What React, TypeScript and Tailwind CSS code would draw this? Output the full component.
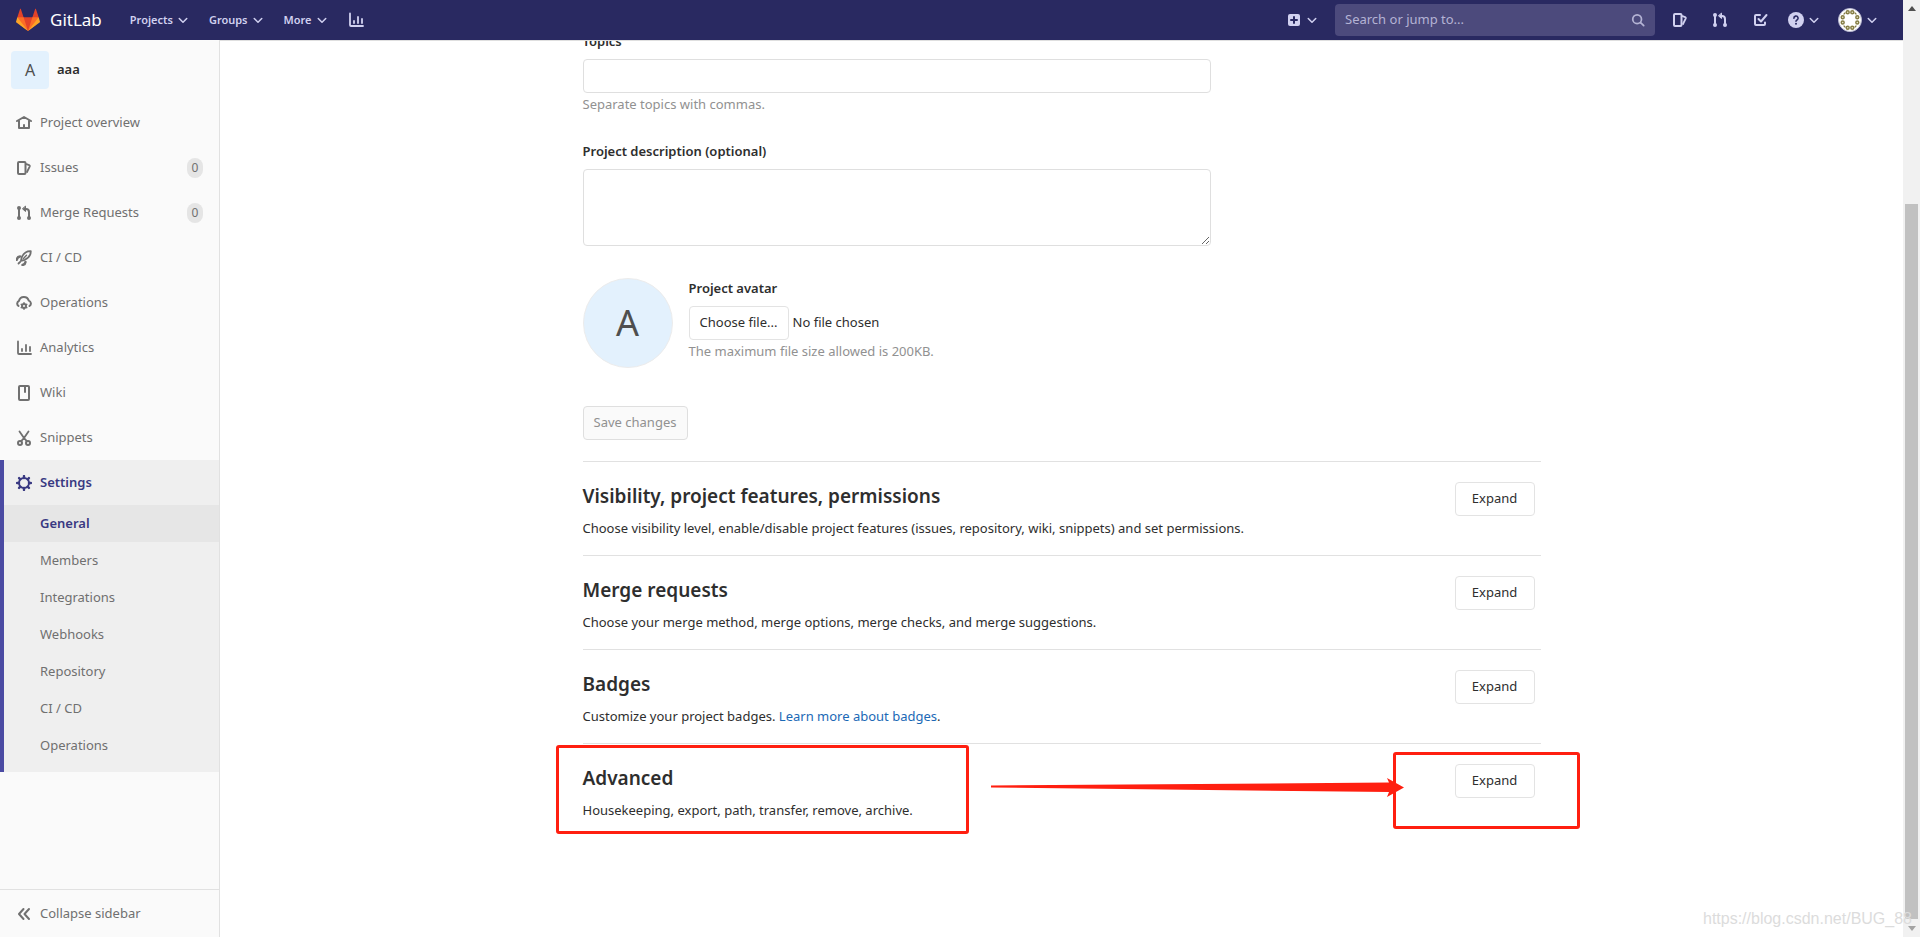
import type { ReactNode } from 'react'
import clsx from 'clsx'

/* ---------- icons (16px grid) ---------- */

type IconProps = { className?: string; children: ReactNode }

function Icon({ className, children }: IconProps) {
  return (
    <svg
      viewBox="0 0 16 16"
      className={clsx('shrink-0', className ?? 'h-4 w-4')}
      fill="none"
      stroke="currentColor"
      strokeWidth="2"
      strokeLinecap="round"
      strokeLinejoin="round"
      aria-hidden="true"
    >
      {children}
    </svg>
  )
}

const Chevron = () => (
  <Icon className="h-3 w-3">
    <path d="M3 6l5 5 5-5" />
  </Icon>
)

const HomeIcon = () => (
  <Icon>
    <path d="M1 6L8 2l7 4M3 6v7h10V6M8 10v3" />
  </Icon>
)

const IssuesIcon = () => (
  <Icon>
    <path d="M3 2h5.500a1 1 0 0 1 1 1v10a1 1 0 0 1-1 1H3a1 1 0 0 1-1-1V3a1 1 0 0 1 1-1z" />
    <path d="M10.500 4.200l2.700.9a1 1 0 0 1 .6 1.200L11 12" strokeWidth="1.800" />
  </Icon>
)

const MergeIcon = () => (
  <Icon>
    <path d="M3 3v10M13 13V7a3 3 0 0 0-3-3H8.500" />
    <circle cx="3" cy="3" r="1" />
    <circle cx="3" cy="13" r="1" />
    <circle cx="13" cy="13" r="1" />
    <path d="M9.500 1.500v5L6.700 4z" fill="currentColor" strokeWidth="1" />
  </Icon>
)

const RocketIcon = () => (
  <Icon>
    <path d="M14.800 1.200c-4-.2-7 1.600-9 6L5 10.800l3.800-1c4.300-2 6-4.600 6-8.600z" strokeWidth="1.800" />
    <path d="M7.500 8.500l3-3.200" strokeWidth="1.400" />
    <path d="M4 6.500C2.300 6.700 1 8 .8 9.800M9.500 12c-.2 1.700-1.200 2.700-3 3" strokeWidth="2.400" />
    <path d="M4.200 11.800l-1.700 1.700" strokeWidth="1.800" />
  </Icon>
)

const CloudGearIcon = () => (
  <Icon>
    <path d="M2.500 11A3 3 0 0 1 3 5.800 5 5 0 0 1 12.700 5.600a3 3 0 0 1 .8 5.400" />
    <circle cx="8" cy="11" r="2" />
    <path d="M8 7.800v1M8 13.200v1M5.200 9.400l.9.5M9.900 12.100l.9.5M5.200 12.600l.9-.5M9.900 9.900l.9-.5" strokeWidth="1.500" />
  </Icon>
)

const ChartIcon = () => (
  <Icon>
    <path d="M2 1.500V13a1 1 0 0 0 1 1h12" strokeWidth="1.800" />
    <path d="M6 9v2M10 5v6M14 7v4" strokeWidth="1.800" />
  </Icon>
)

const BookIcon = () => (
  <Icon>
    <path d="M4 1h8a1 1 0 0 1 1 1v12a1 1 0 0 1-1 1H4a1 1 0 0 1-1-1V2a1 1 0 0 1 1-1z" />
    <path d="M9 2v5" />
  </Icon>
)

const ScissorsIcon = () => (
  <Icon>
    <path d="M3.500 1.500L8 8l2.800 3.200M12.500 1.500L8 8l-2.800 3.200" strokeWidth="1.800" />
    <circle cx="4" cy="13" r="2" />
    <circle cx="12" cy="13" r="2" />
  </Icon>
)

const GearIcon = () => (
  <Icon>
    <circle cx="8" cy="8" r="5" />
    <path
      d="M8 1v2M8 13v2M1 8h2M13 8h2M3.100 3.100l1.200 1.200M11.700 11.700l1.200 1.200M3.100 12.900l1.200-1.200M11.700 4.300l1.200-1.200"
      strokeWidth="2.400"
    />
  </Icon>
)

const CollapseIcon = () => (
  <Icon>
    <path d="M7.500 3L3 8l4.500 5M13 3L8.500 8l4.500 5" />
  </Icon>
)

const PlusIcon = () => (
  <Icon>
    <rect x="2" y="2" width="12" height="12" rx="2" fill="currentColor" strokeWidth="0" />
    <path d="M8 5v6M5 8h6" stroke="#292961" />
  </Icon>
)

const SearchIcon = () => (
  <Icon className="h-3.5 w-3.5">
    <circle cx="7" cy="7" r="5" />
    <path d="M11 11l3.500 3.500" />
  </Icon>
)

const TodoIcon = () => (
  <Icon>
    <path d="M8 3H4a1 1 0 0 0-1 1v8a1 1 0 0 0 1 1h8a1 1 0 0 0 1-1v-1.500" />
    <path d="M6.500 7L9 9.500 14.500 3" />
  </Icon>
)

const HelpIcon = () => (
  <Icon>
    <circle cx="8" cy="8" r="8" fill="currentColor" strokeWidth="0" />
    <path d="M5.900 6.300A2.100 2.100 0 1 1 9 8c-.7.400-1 .8-1 1.300" stroke="#292961" strokeWidth="1.600" />
    <circle cx="8" cy="11.800" r="1" fill="#292961" strokeWidth="0" />
  </Icon>
)

const Logo = () => (
  <svg viewBox="0 0 36 36" className="h-6 w-6" aria-hidden="true">
    <path fill="#e24329" d="M2 14l9.380 9v-9l-4-12.280c-.205-.632-1.176-.632-1.380 0z" />
    <path fill="#e24329" d="M34 14l-9.380 9v-9l4-12.280c.205-.632 1.176-.632 1.380 0z" />
    <path fill="#e24329" d="M18 34.380L3 14h30z" />
    <path fill="#fc6d26" d="M18 34.380L11.380 14H2l4 11z" />
    <path fill="#fc6d26" d="M18 34.380L24.620 14H34l-4 11z" />
    <path fill="#fca326" d="M2 14L.1 20.160c-.18.565 0 1.200.5 1.560l17.420 12.660z" />
    <path fill="#fca326" d="M34 14l1.900 6.160c.18.565 0 1.200-.5 1.560L18 34.380z" />
  </svg>
)

// Eight small rings in facing pairs round a white disc
const RINGS = [
  [9.700, 4.200],
  [14.300, 4.200],
  [19.300, 9.200],
  [19.300, 14.500],
  [14.300, 19.800],
  [9.700, 19.800],
  [4.700, 14.500],
  [4.700, 9.200],
]

const UserAvatar = () => (
  <svg viewBox="0 0 24 24" className="h-6 w-6" aria-hidden="true">
    <circle cx="12" cy="12" r="11.500" fill="#fff" stroke="#b9b9d0" />
    {RINGS.map(([cx, cy]) => (
      <circle key={`${cx}-${cy}`} cx={cx} cy={cy} r="1.500" fill="#e6e3c8" stroke="#857d45" strokeWidth="1.400" />
    ))}
    <path
      d="M6 6l1-1M17 5l1 1M6 18l1 1M17 19l1-1"
      stroke="#857d45"
      strokeWidth="1.200"
      strokeLinecap="round"
    />
  </svg>
)

/* ---------- data ---------- */

const MENUS = ['Projects', 'Groups', 'More']

const NAV = [
  { label: 'Project overview', icon: <HomeIcon /> },
  { label: 'Issues', icon: <IssuesIcon />, count: 0 },
  { label: 'Merge Requests', icon: <MergeIcon />, count: 0 },
  { label: 'CI / CD', icon: <RocketIcon /> },
  { label: 'Operations', icon: <CloudGearIcon /> },
  { label: 'Analytics', icon: <ChartIcon /> },
  { label: 'Wiki', icon: <BookIcon /> },
  { label: 'Snippets', icon: <ScissorsIcon /> },
]

const SETTINGS = ['General', 'Members', 'Integrations', 'Webhooks', 'Repository', 'CI / CD', 'Operations']

/* ---------- page parts ---------- */

function Header() {
  return (
    <header className="flex h-10 shrink-0 items-center bg-[#292961] pl-4 pr-[25px] text-[#d1d1f0]">
      <a href="#" className="flex items-center gap-2.5 text-[17px] text-white">
        <Logo />
        GitLab
      </a>
      <nav className="ml-7 flex items-center gap-5">
        {MENUS.map((menu) => (
          <button key={menu} className="flex items-center gap-1 text-[11px] font-semibold">
            {menu}
            <Chevron />
          </button>
        ))}
        <a href="#" aria-label="Analytics">
          <ChartIcon />
        </a>
      </nav>

      <div className="ml-auto flex items-center">
        <button aria-label="New" className="flex items-center gap-1">
          <PlusIcon />
          <Chevron />
        </button>
        <label className="ml-[17px] flex h-8 w-80 items-center rounded bg-[#4c4a7c] px-2.5">
          <input
            type="text"
            aria-label="Search"
            placeholder="Search or jump to..."
            className="min-w-0 flex-1 bg-transparent text-[13px] outline-none placeholder:text-[#b4b3d4]"
          />
          <span className="text-[#b4b3d4]">
            <SearchIcon />
          </span>
        </label>
        <div className="ml-[17px] flex items-center gap-6">
          <a href="#" aria-label="Issues">
            <IssuesIcon />
          </a>
          <a href="#" aria-label="Merge requests">
            <MergeIcon />
          </a>
          <a href="#" aria-label="To-Do List">
            <TodoIcon />
          </a>
        </div>
        <button aria-label="Help" className="ml-5 flex items-center gap-1">
          <HelpIcon />
          <Chevron />
        </button>
        <button aria-label="Account" className="ml-[18px] flex items-center gap-1">
          <UserAvatar />
          <Chevron />
        </button>
      </div>
    </header>
  )
}

function Sidebar() {
  return (
    <aside className="flex w-[220px] shrink-0 flex-col border-r border-[#e1e1e1] bg-[#fafafa] text-[#707070]">
      <a href="#" className="flex h-[60px] items-center gap-2 px-[11px] font-semibold text-[#2e2e2e]">
        <span className="flex h-[38px] w-[38px] items-center justify-center rounded bg-[#e3f1fd] text-base font-normal text-[#4f4f4f]">
          A
        </span>
        aaa
      </a>

      <ul>
        {NAV.map((item) => (
          <li key={item.label}>
            <a href="#" className="flex h-[45px] items-center gap-2 px-4">
              {item.icon}
              {item.label}
              {item.count !== undefined && (
                <span className="ml-auto flex h-5 w-4 items-center justify-center rounded-full bg-[#e5e5e5] text-xs">
                  {item.count}
                </span>
              )}
            </a>
          </li>
        ))}
        <li className="border-l-4 border-[#4b4ba3] bg-[#efefef] pb-2">
          <a href="#" className="flex h-[45px] items-center gap-2 pl-3 font-semibold text-[#393982]">
            <GearIcon />
            Settings
          </a>
          <ul>
            {SETTINGS.map((label, i) => (
              <li key={label}>
                <a
                  href="#"
                  className={clsx(
                    'flex h-[37px] items-center pl-9',
                    i === 0 && 'bg-[#e6e6e6] font-semibold text-[#393982]'
                  )}
                >
                  {label}
                </a>
              </li>
            ))}
          </ul>
        </li>
      </ul>

      <button className="mt-auto flex h-12 items-center gap-2 border-t border-[#e1e1e1] px-4">
        <CollapseIcon />
        Collapse sidebar
      </button>
    </aside>
  )
}

type SectionProps = { title: string; children: ReactNode; overlay?: ReactNode }

function Section({ title, children, overlay }: SectionProps) {
  return (
    <section className="relative flex h-[94px] items-start justify-between border-t border-[#e1e1e1] pr-1.5 pt-5">
      <div>
        <h4 className="text-[19px] font-semibold leading-7">{title}</h4>
        <p className="mt-2 leading-5">{children}</p>
      </div>
      <button className="h-[34px] w-20 rounded border border-[#e3e3e3] bg-white">Expand</button>
      {overlay}
    </section>
  )
}

// Red marks pointing from the Advanced section to its Expand button
function Marks() {
  return (
    <>
      <div className="absolute -left-[27px] top-px h-[89px] w-[413px] rounded-[3px] border-3 border-[#ff1f10]" />
      <div className="absolute -right-[39px] top-2 h-[77px] w-[187px] rounded-[3px] border-3 border-[#ff1f10]" />
      <svg viewBox="0 0 413 20" className="absolute right-[137px] top-[33px] h-5 w-[413px]" aria-hidden="true">
        <path fill="#ff1f10" d="M0 8.500l398-3L396 1l17 9.500L396 20l2-5L0 10.500z" />
      </svg>
    </>
  )
}

function GeneralForm() {
  return (
    <form className="-mt-[10px]">
      <label htmlFor="topics" className="block font-semibold leading-5">
        Topics
      </label>
      <input
        id="topics"
        type="text"
        className="mt-2 block h-[34px] w-full max-w-[628px] rounded border border-[#dfdfdf] px-2.5"
      />
      <p className="mt-px leading-5 text-[#919191]">Separate topics with commas.</p>

      <label htmlFor="description" className="mt-[27px] block font-semibold leading-5">
        Project description (optional)
      </label>
      <textarea
        id="description"
        className="mt-2 block h-[77px] w-full max-w-[628px] resize rounded border border-[#dfdfdf] px-2.5"
      />

      <div className="mt-8 flex gap-4">
        <div className="flex h-[90px] w-[90px] items-center justify-center rounded-full border border-[#ececec] bg-[#e3f1fd] text-4xl text-[#4f4f4f]">
          A
        </div>
        <div>
          <h5 className="font-semibold leading-5">Project avatar</h5>
          <div className="mt-2 flex items-center gap-1">
            <button type="button" className="h-[34px] w-[100px] rounded border border-[#e3e3e3] bg-white">
              Choose file...
            </button>
            <span>No file chosen</span>
          </div>
          <p className="mt-px leading-5 text-[#919191]">The maximum file size allowed is 200KB.</p>
        </div>
      </div>

      <button
        type="submit"
        disabled
        className="mb-[21px] mt-[38px] block h-[34px] w-[105px] rounded border border-[#dfdfdf] bg-[#fafafa] text-[#919191]"
      >
        Save changes
      </button>
    </form>
  )
}

function ScrollBar() {
  return (
    <div className="flex w-[17px] shrink-0 flex-col items-center bg-[#f1f1f1] py-[6px]">
      <svg viewBox="0 0 8 5" className="h-[5px] w-2" aria-hidden="true">
        <path d="M0 5l4-5 4 5z" fill="#505050" />
      </svg>
      <div className="mb-[7px] mt-[193px] w-[13px] flex-1 bg-[#c1c1c1]" />
      <svg viewBox="0 0 8 5" className="h-[5px] w-2" aria-hidden="true">
        <path d="M0 0l4 5 4-5z" fill="#a3a3a3" />
      </svg>
    </div>
  )
}

export default function App() {
  return (
    <div className="relative flex h-screen overflow-hidden bg-white font-['Noto_Sans','Open_Sans',sans-serif] text-[13px] text-[#2e2e2e]">
      <div className="flex min-w-0 flex-1 flex-col">
        <Header />
        <div className="flex min-h-0 flex-1">
          <Sidebar />
          <main className="min-w-0 flex-1 overflow-hidden border-t border-[#dfdfdf]">
            <div className="mx-auto max-w-[990px] px-4">
              <GeneralForm />
              <Section title="Visibility, project features, permissions">
                Choose visibility level, enable/disable project features (issues, repository, wiki, snippets) and set
                permissions.
              </Section>
              <Section title="Merge requests">
                Choose your merge method, merge options, merge checks, and merge suggestions.
              </Section>
              <Section title="Badges">
                Customize your project badges.{' '}
                <a href="#" className="text-[#1b69b6]">
                  Learn more about badges
                </a>
                .
              </Section>
              <Section title="Advanced" overlay={<Marks />}>
                Housekeeping, export, path, transfer, remove, archive.
              </Section>
            </div>
          </main>
        </div>
      </div>
      <ScrollBar />
      <div className="absolute bottom-1.5 right-2 font-['Liberation_Sans',sans-serif] text-base text-[#dcdcdc]">
        https://blog.csdn.net/BUG_88
      </div>
    </div>
  )
}
